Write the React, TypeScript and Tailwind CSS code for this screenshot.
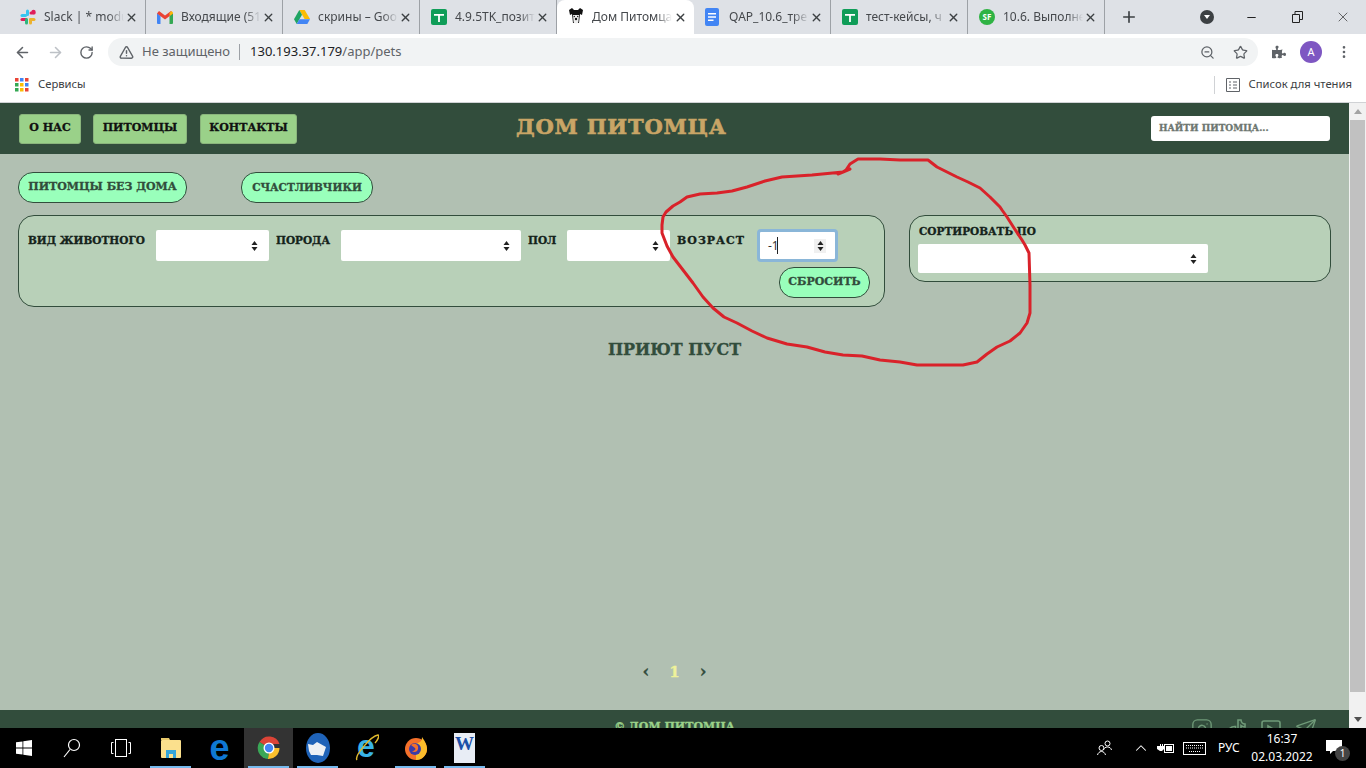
import React from 'react';
import { ArrowLeft, ArrowRight, RotateCw, ZoomOut, Star, MoreVertical, Plus, X, Minus, Instagram, Send, TriangleAlert, ChevronUp } from 'lucide-react';
import { FaPuzzlePiece } from 'react-icons/fa';

const uiFont = "font-['Noto_Sans',sans-serif]";
const petFont = "font-['DejaVu_Serif',serif] font-bold uppercase [-webkit-text-stroke:0.3px]";

const SlackIcon = () => (
  <svg width="16" height="16" viewBox="0 0 16 16">
    <rect x="6" y="0.5" width="3" height="6.5" rx="1.5" fill="#36c5f0" />
    <rect x="0.5" y="5" width="6.5" height="3" rx="1.5" fill="#36c5f0" />
    <rect x="9" y="1" width="3" height="6" rx="1.5" fill="#e01e5a" transform="rotate(90 11.5 5)" />
    <circle cx="13.5" cy="3" r="2.2" fill="#e01e5a" />
    <rect x="9" y="9" width="6.5" height="3" rx="1.5" fill="#ecb22e" />
    <rect x="9" y="9" width="3" height="6.5" rx="1.5" fill="#ecb22e" />
    <rect x="0.5" y="9" width="7" height="3" rx="1.5" fill="#e01e5a" />
    <rect x="5" y="9" width="3" height="6.5" rx="1.5" fill="#2eb67d" />
  </svg>
);

const GmailIcon = () => (
  <svg width="16" height="13" viewBox="0 0 16 13">
    <path d="M0 2v10a1 1 0 0 0 1 1h2.5V5z" fill="#4285f4" />
    <path d="M16 2v10a1 1 0 0 1-1 1h-2.5V5z" fill="#34a853" />
    <path d="M0 2.5 8 8.5l8-6L14 0 8 4.5 2 0z" fill="#ea4335" />
    <path d="M12.5 2v3l3.5-2.5V1.500L14.500 0z" fill="#fbbc04" />
  </svg>
);

const DriveIcon = () => (
  <svg width="16" height="14" viewBox="0 0 16 14">
    <path d="M5.300 0h5.400l5.300 9h-5.400z" fill="#fbbc04" />
    <path d="M5.300 0 8 4.700 2.700 14 0 9.200z" fill="#1fa463" />
    <path d="M16 9.200 13.300 14H2.700L5.400 9.200z" fill="#4285f4" />
  </svg>
);

const SheetsIcon = () => (
  <svg width="16" height="16" viewBox="0 0 16 16">
    <rect width="16" height="16" rx="2" fill="#0f9d58" />
    <path d="M3 5h10v1.800H8.900V13H7.100V6.800H3z" fill="#fff" />
  </svg>
);

const DocsIcon = () => (
  <svg width="14" height="18" viewBox="0 0 14 18">
    <rect width="14" height="18" rx="2" fill="#4285f4" />
    <path d="M3 5h8v1.500H3zM3 8.200h8v1.500H3zM3 11.400h5.500v1.500H3z" fill="#fff" />
  </svg>
);

const SfIcon = () => (
  <span className="flex h-4 w-4 items-center justify-center rounded-full bg-[#2fb344] text-[8px] font-bold text-white">SF</span>
);

const DogIcon = () => (
  <svg width="16" height="18" viewBox="0 0 16 18">
    <path d="M1 2 4 0l2 2h4l2-2 3 2-1 5-2-1-1 9H5L4 6 2 7z" fill="#111" />
    <path d="M5 7h6l-.5 6a2.500 2.500 0 0 1-5 0z" fill="#eee" />
    <circle cx="8" cy="11" r="1.200" fill="#111" />
    <circle cx="6.300" cy="8.500" r=".7" fill="#111" />
    <circle cx="9.700" cy="8.500" r=".7" fill="#111" />
  </svg>
);

const tabs = [
  { title: 'Slack | * modu', icon: <SlackIcon /> },
  { title: 'Входящие (51', icon: <GmailIcon /> },
  { title: 'скрины – Goo', icon: <DriveIcon /> },
  { title: '4.9.5TK_позит', icon: <SheetsIcon /> },
  { title: 'Дом Питомца', icon: <DogIcon />, active: true },
  { title: 'QAP_10.6_тре', icon: <DocsIcon /> },
  { title: 'тест-кейсы, ч', icon: <SheetsIcon /> },
  { title: '10.6. Выполне', icon: <SfIcon /> },
];

const Tab = ({ title, icon, active }: { title: string; icon: React.ReactNode; active?: boolean }) => (
  <div className={`flex h-[34px] w-[137px] shrink-0 items-center pl-[11px] pr-[7px] ${active ? 'rounded-t-lg bg-white' : 'border-r border-[#9da1a6] my-0 h-[22px]'}`}>
    <span className="flex w-[24px] shrink-0 items-center">{icon}</span>
    <span className="w-[80px] overflow-hidden whitespace-nowrap text-xs text-[#45484c] [mask-image:linear-gradient(90deg,#000_80%,transparent)]">{title}</span>
    <X size={13} strokeWidth={2.5} className="ml-auto text-[#3c4043]" />
  </div>
);

const AppsIcon = () => (
  <svg width="14" height="14" viewBox="0 0 14 14">
    {[0, 5, 10].map((y, r) =>
      [0, 5, 10].map((x, c) => (
        <rect key={`${r}${c}`} x={x} y={y} width="3.500" height="3.500" fill={['#ea4335', '#4285f4', '#ea4335', '#34a853', '#fbbc04', '#4285f4', '#34a853', '#fbbc04', '#ea4335'][r * 3 + c]} />
      ))
    )}
  </svg>
);

const Updown = () => (
  <svg width="7" height="10" viewBox="0 0 7 10" className="shrink-0">
    <path d="M3.500 0 6.500 4h-6zM3.500 10 .5 6h6z" fill="#222" />
  </svg>
);

const FakeSelect = ({ className }: { className: string }) => (
  <div className={`flex items-center justify-end rounded-[2px] bg-white pr-[11px] ${className}`}>
    <Updown />
  </div>
);

const NavButton = ({ label, className }: { label: string; className: string }) => (
  <div className={`${petFont} flex h-[30px] items-center justify-center rounded-[3px] border border-[#8ab57c] bg-[#9ad189] text-[11px] text-[#111] ${className}`}>{label}</div>
);

const Pill = ({ label, className }: { label: string; className: string }) => (
  <div className={`${petFont} flex h-[31px] items-center justify-center rounded-[15px] border border-[#324d3c] bg-[#99ffbb] text-[#324d3c] ${className}`}>{label}</div>
);

const FilterLabel = ({ label, className }: { label: string; className: string }) => (
  <span className={`${petFont} mt-[3px] shrink-0 whitespace-nowrap text-[#15231b] ${className}`}>{label}</span>
);

const TikTok = () => (
  <svg width="20" height="24" viewBox="0 0 20 24" fill="none" stroke="#6f9a78" strokeWidth="1.600">
    <path d="M11 2h3c.3 2.500 2 4 4 4v3c-1.600 0-3-.5-4-1.300V15a6.500 6.500 0 1 1-6.500-6.500h1v3.200h-1a3.300 3.300 0 1 0 3.500 3.300z" />
  </svg>
);

const PlaySquare = () => (
  <svg width="20" height="24" viewBox="0 0 20 24" fill="none" stroke="#6f9a78" strokeWidth="1.600">
    <rect x="1" y="3" width="18" height="18" rx="2" />
    <path d="M7 8l7 4-7 4z" />
  </svg>
);

const WinLogo = () => (
  <svg width="16" height="16" viewBox="0 0 16 16" fill="#fff">
    <path d="M0 2.300 6.500 1.400v6.200H0zM7.300 1.300 16 0v7.600H7.300zM0 8.400h6.500v6.200L0 13.700zM7.300 8.400H16V16l-8.700-1.300z" />
  </svg>
);

const TaskView = () => (
  <svg width="20" height="18" viewBox="0 0 20 18" fill="none" stroke="#fff" strokeWidth="1">
    <rect x="4.500" y=".5" width="11" height="17" />
    <path d="M2.500 3.500H.5v11h2M17.500 3.500h2v11h-2" />
  </svg>
);

const SearchGlass = () => (
  <svg width="18" height="20" viewBox="0 0 18 20" fill="none" stroke="#fff" strokeWidth="1.200">
    <circle cx="11" cy="7" r="5.500" />
    <path d="M7 11.500 1 19" />
  </svg>
);

const Explorer = () => (
  <svg width="22" height="24" viewBox="0 0 22 24">
    <path d="M1 2h8l1 2h-9z" fill="#e8c96b" />
    <rect x="1" y="4" width="20" height="18" rx="1" fill="#fbe08d" />
    <rect x="6" y="14" width="10" height="8" fill="#35a5d8" />
    <rect x="9" y="18" width="4" height="4" fill="#fbe08d" />
  </svg>
);

const EdgeIcon = () => (
  <span className="font-['Liberation_Sans',sans-serif] text-[36px] font-bold leading-[26px] text-[#0f78d4]">e</span>
);

const ChromeIcon = () => (
  <svg width="24" height="24" viewBox="0 0 24 24">
    <path d="M12 12 2.500 6A11 11 0 0 1 22.500 8H12z" fill="#db4437" />
    <path d="M12 12H22.500A11 11 0 0 1 11 23z" fill="#fbc02d" />
    <path d="M12 12 11 23A11 11 0 0 1 2.500 6z" fill="#3aa757" />
    <circle cx="12" cy="12" r="5.500" fill="#fff" />
    <circle cx="12" cy="12" r="4.200" fill="#4285f4" />
  </svg>
);

const Thunderbird = () => (
  <svg width="24" height="32" viewBox="0 0 24 32">
    <ellipse cx="12" cy="16" rx="12" ry="15" fill="#1f63b8" />
    <path d="M2 12l5 1 4-3 9 5-3 9-6-1-6 0-2-4z" fill="#eef1f5" />
  </svg>
);

const IeIcon = () => (
  <svg width="24" height="32" viewBox="0 0 24 32">
    <text x="2" y="25" fontFamily="Liberation Sans, sans-serif" fontSize="32" fontWeight="700" fill="#39b3e6">e</text>
    <path d="M2 28C-1 24 16 4 23 3c2 1-1 6-3 8" fill="none" stroke="#e0b92c" strokeWidth="1.500" />
  </svg>
);

const Firefox = () => (
  <svg width="24" height="32" viewBox="0 0 24 32">
    <circle cx="12" cy="17" r="11" fill="#f4702a" />
    <path d="M12 28A11 11 0 0 0 23 17c0-5-3-9-5-12 0 4-2 6-6 6z" fill="#fbbc2b" />
    <circle cx="11" cy="17" r="6" fill="#3c3ba8" />
    <path d="M7 13c4-3 8 0 7 4-.5 3-4 4-6 2 3 0 4-2 3-3z" fill="#f4702a" />
  </svg>
);

const WordIcon = () => (
  <div className="relative flex h-[30px] w-[21px] items-start justify-center bg-[#e8edf5]">
    <span className="font-['Liberation_Serif',serif] text-[19px] font-bold leading-[22px] text-[#1c50a8]">W</span>
  </div>
);

const taskItems = [
  { icon: <Explorer />, running: true },
  { icon: <EdgeIcon /> },
  { icon: <ChromeIcon />, running: true, active: true },
  { icon: <Thunderbird />, running: true },
  { icon: <IeIcon /> },
  { icon: <Firefox />, running: true },
  { icon: <WordIcon />, running: true },
];

const inkPoints =
  '858,159 850,164 846,170 843,172 838,174 850,169 843,172 812,175 782,177 765,181 747,187 732,191 717,193 700,194 687,197 680,202 673,206 666,212 663,217 662,225 662,233 667,246 673,257 683,270 693,283 703,297 713,308 724,317 737,323 752,331 767,338 787,344 807,347 825,352 843,355 862,356 880,360 900,362 917,365 940,365 963,365 977,362 987,354 997,347 1010,341 1020,333 1027,323 1030,313 1030,285 1029,253 1025,245 1022,240 1014,228 1007,217 1002,210 1000,207 990,197 980,188 968,182 957,177 947,172 937,167 928,160 915,160 900,160 880,159 858,159';

export default function App() {
  return (
    <div className={`${uiFont} relative flex h-screen w-full flex-col overflow-hidden bg-white`}>
      {/* browser tabs */}
      <div className="flex h-[34px] items-center bg-[#dee1e6] pl-[9px]">
        {tabs.map((t) => (
          <Tab key={t.title} title={t.title} icon={t.icon} active={t.active} />
        ))}
        <Plus size={18} strokeWidth={2.2} className="ml-[15px] text-[#3c4043]" />
        <div className="ml-[62px] flex h-[14px] w-[14px] items-center justify-center rounded-full bg-[#3c4043]">
          <div className="h-0 w-0 border-x-[3.5px] border-t-[4px] border-x-transparent border-t-white" />
        </div>
        <Minus size={13} className="ml-[31px] text-[#222]" />
        <svg width="11" height="12" viewBox="0 0 11 12" fill="none" stroke="#222" className="ml-[34px]">
          <path d="M.5 3.500h7v8h-7zM3 3.500v-3h7.500v8H7.500" />
        </svg>
        <X size={16} strokeWidth={1} className="ml-[32px] text-[#222]" />
      </div>

      {/* address bar */}
      <div className="flex h-[36px] items-center bg-white pl-[14px]">
        <ArrowLeft size={17} strokeWidth={2.2} className="text-[#5f6368]" />
        <ArrowRight size={17} strokeWidth={2.2} className="ml-[16px] text-[#bdc1c6]" />
        <RotateCw size={15} strokeWidth={2.2} className="ml-[15px] text-[#5f6368]" />
        <div className="ml-[14px] flex h-[28px] w-[1150px] items-center rounded-full bg-[#f1f3f4] pl-[11px] pr-[10px]">
          <TriangleAlert size={15} strokeWidth={2.4} className="text-[#5f6368]" />
          <span className="ml-[8px] text-[13px] text-[#5f6368]">Не защищено</span>
          <span className="ml-[9px] h-[16px] w-px bg-[#9da1a6]" />
          <span className="ml-[10px] text-[13px] text-[#202124]">130.193.37.179<span className="text-[#5f6368]">/app/pets</span></span>
          <ZoomOut size={15} className="ml-auto text-[#5f6368]" />
          <Star size={15} className="ml-[18px] text-[#5f6368]" />
        </div>
        <FaPuzzlePiece size={14} className="ml-[14px] text-[#5f6368]" />
        <div className="ml-[14px] flex h-[22px] w-[22px] items-center justify-center rounded-full bg-[#7e57c2] text-[11px] text-white">A</div>
        <MoreVertical size={16} className="ml-[14px] text-[#5f6368]" />
      </div>

      {/* bookmarks */}
      <div className="flex h-[33px] items-center border-b border-[#d0d2d5] bg-white pb-[3px] pl-[15px] pr-[14px] text-[11.25px] text-[#3c4043]">
        <AppsIcon />
        <span className="ml-[9px]">Сервисы</span>
        <span className="ml-auto h-[18px] w-px bg-[#d0d2d5]" />
        <svg width="14" height="14" viewBox="0 0 14 14" fill="none" stroke="#5f6368" className="ml-[11px]">
          <path d="M.5.500h13v13H.500zM3 4h2M3 7h2M3 10h2M7 4h4M7 7h4M7 10h4" />
        </svg>
        <span className="ml-[9px]">Список для чтения</span>
      </div>

      {/* page + scrollbar */}
      <div className="flex min-h-0 flex-1">
        <div className="flex min-w-0 flex-1 flex-col bg-[#b1c0b2]">
          <header className="flex h-[51px] shrink-0 items-center bg-[#324d3c] pl-[19px] pr-[19px]">
            <NavButton label="О нас" className="w-[62px]" />
            <NavButton label="Питомцы" className="ml-[12px] w-[94px]" />
            <NavButton label="Контакты" className="ml-[13px] w-[97px]" />
            <span className={`${petFont} ml-[219px] mb-[3px] text-[21px] tracking-[0.8px] text-[#c9a566] [-webkit-text-stroke:0.6px]`}>Дом питомца</span>
            <div className={`${petFont} ml-auto flex h-[25px] w-[179px] items-center rounded-[3px] bg-white pl-[8px] text-[9px] text-[#6d7670]`}>Найти питомца...</div>
          </header>

          <main className="flex flex-1 flex-col px-[18px] pt-[18px]">
            <div className="flex gap-[54px]">
              <Pill label="Питомцы без дома" className="w-[169px] text-[11px]" />
              <Pill label="Счастливчики" className="w-[132px] text-[10.5px]" />
            </div>

            <div className="mt-[12px] flex items-start justify-between">
              <div className="relative h-[92px] w-[867px] rounded-[16px] border border-[#324d3c] bg-[#b8d0b8]">
                <div className="flex items-start pl-[9px] pt-[14px]">
                  <FilterLabel label="Вид животного" className="w-[128px] text-[10.5px]" />
                  <FakeSelect className="h-[31px] w-[113px]" />
                  <FilterLabel label="Порода" className="ml-[7px] w-[65px] text-[10.5px]" />
                  <FakeSelect className="h-[31px] w-[180px]" />
                  <FilterLabel label="Пол" className="ml-[7px] w-[39px] text-[10.5px]" />
                  <FakeSelect className="h-[31px] w-[103px]" />
                  <FilterLabel label="Возраст" className="ml-[7px] w-[80px] text-[11px] tracking-[1px]" />
                  <div className="-mt-[1px] flex h-[33px] w-[81px] items-center rounded-[4px] border-[3px] border-[#8ab6d8] bg-white pl-[8px] pr-[9px]">
                    <span className="text-[12px] text-[#333]">-1</span>
                    <span className="-ml-[2px] h-[17px] w-px bg-[#222]" />
                    <span className="ml-auto flex h-[14px] w-[12px] items-center justify-center bg-[#f0f0f0]"><Updown /></span>
                  </div>
                </div>
                <Pill label="Сбросить" className="absolute right-[14px] top-[51px] w-[91px] text-[11px]" />
              </div>

              <div className="flex h-[67px] w-[422px] flex-col rounded-[16px] border border-[#324d3c] bg-[#b8d0b8] px-[8px] pt-[9px]">
                <span className={`${petFont} pl-[1px] text-[10.5px] leading-[13px] text-[#15231b]`}>Сортировать по</span>
                <FakeSelect className="mt-[6px] h-[29px] w-[290px]" />
              </div>
            </div>

            <p className={`${petFont} mt-[32px] text-center text-[16px] leading-[22px] text-[#324d3c]`}>Приют пуст</p>

            <div className={`${petFont} mt-auto mb-[29px] flex h-[18px] items-center justify-center gap-[20px] text-[17px] text-[#324d3c]`}>
              <span>‹</span>
              <span className="text-[15px] text-[#eef29a]">1</span>
              <span>›</span>
            </div>
          </main>

          <footer className="relative flex h-[18px] shrink-0 justify-center overflow-hidden bg-[#324d3c]">
            <span className={`${petFont} mt-[9px] whitespace-nowrap text-[11px] text-[#9ad189]`}>© Дом питомца</span>
            <div className="absolute right-[32px] top-[8px] flex gap-[14px] text-[#6f9a78]">
              <Instagram size={22} strokeWidth={1.5} />
              <TikTok />
              <PlaySquare />
              <Send size={22} strokeWidth={1.5} />
            </div>
          </footer>
        </div>

        {/* scrollbar */}
        <div className="flex w-[17px] shrink-0 flex-col bg-[#f1f1f1]">
          <div className="flex h-[17px] items-center justify-center">
            <div className="h-0 w-0 border-x-[4px] border-b-[5px] border-x-transparent border-b-[#a3a3a3]" />
          </div>
          <div className="mx-auto h-[572px] w-[15px] bg-[#c1c1c1]" />
          <div className="mt-auto flex h-[17px] items-center justify-center">
            <div className="h-0 w-0 border-x-[4px] border-t-[5px] border-x-transparent border-t-[#505050]" />
          </div>
        </div>
      </div>

      {/* windows taskbar */}
      <div className="flex h-[40px] shrink-0 items-center bg-black text-white">
        <div className="flex h-full w-[48px] items-center justify-center"><WinLogo /></div>
        <div className="flex h-full w-[48px] items-center justify-center"><SearchGlass /></div>
        <div className="flex h-full w-[50px] items-center justify-center"><TaskView /></div>
        {taskItems.map((item, i) => (
          <div key={i} className={`relative flex h-full w-[49px] items-center justify-center ${item.active ? 'bg-[#333]' : ''}`}>
            {item.icon}
            {item.running && <span className="absolute bottom-0 left-[4px] right-[4px] h-[2px] bg-[#76b9ed]" />}
          </div>
        ))}
        <div className="ml-auto flex h-full items-center pr-[24px]">
          <svg width="16" height="16" viewBox="0 0 16 16" fill="none" stroke="#fff">
            <circle cx="10.500" cy="3.500" r="2.500" />
            <path d="M6.500 10c.5-2 2-3 4-3s3.500 1 4 3" />
            <circle cx="4.500" cy="8" r="2.500" />
            <path d="M.5 15c.5-2 2-3.500 4-3.500s3.500 1.500 4 3.500" />
          </svg>
          <ChevronUp size={18} strokeWidth={1.4} className="ml-[19px]" />
          <svg width="17" height="11" viewBox="0 0 17 11" className="ml-[7px]">
            <path d="M0 3h3V1h1v2h1V1h1v2h1v3L5 8H3L0 6z" fill="#fff" />
            <rect x="7.500" y="1.500" width="9" height="8" fill="none" stroke="#fff" />
            <rect x="9" y="3" width="6" height="5" fill="#fff" />
          </svg>
          <svg width="23" height="13" viewBox="0 0 23 13" fill="none" stroke="#fff" className="ml-[9px]">
            <rect x=".5" y=".5" width="22" height="12" />
            <path d="M3 3.500h17M3 6h17M6 9.500h11" strokeDasharray="1 1" />
          </svg>
          <span className="ml-[12px] w-[24px] text-xs">РУС</span>
          <div className="ml-[13px] flex w-[54px] flex-col items-center text-[12px] leading-[18px]">
            <span>16:37</span>
            <span>02.03.2022</span>
          </div>
          <div className="relative ml-[17px] h-[16px] w-[16px]">
            <svg width="16" height="15" viewBox="0 0 16 15" fill="#fff">
              <path d="M0 0h16v11H7l-3 3v-3H0z" />
            </svg>
            <span className="absolute -bottom-[5px] -right-[8px] flex h-[15px] w-[15px] items-center justify-center rounded-full bg-[#444] text-[10px]">1</span>
          </div>
        </div>
      </div>

      {/* red pen annotation drawn on the screenshot */}
      <svg width="1366" height="768" viewBox="0 0 1366 768" className="pointer-events-none absolute left-0 top-0">
        <polyline points={inkPoints} fill="none" stroke="#d9222a" strokeWidth="3" strokeLinejoin="round" strokeLinecap="round" />
      </svg>
    </div>
  );
}
